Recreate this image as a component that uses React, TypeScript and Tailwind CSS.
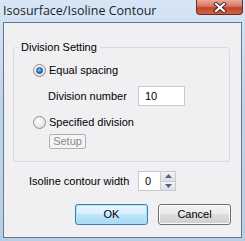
import React from "react";

function Radio({ checked }: { checked?: boolean }) {
  return (
    <span className="w-[13px] h-[13px] rounded-full border border-[#8e8f8f] bg-[radial-gradient(circle_at_40%_35%,#ffffff,#d6d6d6)] flex items-center justify-center shrink-0">
      {checked && (
        <span className="w-[7px] h-[7px] rounded-full bg-[radial-gradient(circle_at_40%_35%,#7fd2f7,#1c6ab0_70%,#0d4a86)] border border-[#1a4f82]" />
      )}
    </span>
  );
}

export default function App() {
  return (
    <div
      className="w-[245px] h-[241px] flex flex-col bg-[linear-gradient(180deg,#d7e6f6_0%,#bfd5ee_40%,#b6cfe9_100%)] text-[11px]"
      style={{ fontFamily: '"Liberation Sans", Arial, sans-serif' }}
    >
      {/* Title bar */}
      <div className="h-[22px] flex items-start justify-between shrink-0">
        <span
          className="pl-[3px] pt-[3px] text-[12.5px] leading-[15px] text-[#1e1e1e] whitespace-nowrap"
          style={{ fontFamily: '"Open Sans", "Noto Sans", sans-serif' }}
        >
          Isosurface/Isoline Contour
        </span>
        <div className="mr-[2px] w-[47px] h-[15px] rounded-b-[4px] border border-t-0 border-[#6b2a20] bg-[linear-gradient(180deg,#e9a99b_0%,#d7765f_45%,#c2432b_55%,#d0624a_100%)] flex items-center justify-center">
          <svg width="14" height="11" viewBox="0 0 14 11">
            <path d="M3 2 L11 9 M11 2 L3 9" stroke="#4a2a28" strokeWidth="4" strokeLinecap="square" />
            <path d="M3 2 L11 9 M11 2 L3 9" stroke="#ffffff" strokeWidth="2" strokeLinecap="square" />
          </svg>
        </div>
      </div>

      {/* Client area */}
      <div className="mx-[3px] mb-[3px] flex-1 border border-[#6a7786] bg-[#f0eff2] flex flex-col text-[#000]">
        <fieldset className="ml-[9px] mt-[17px] w-[217px] h-[122px] border border-[#d5dbe1] rounded-[3px] px-0 pb-0 pt-0">
          <legend className="ml-[4px] px-[3px] leading-[14px] whitespace-nowrap">Division Setting</legend>
          <div className="flex flex-col pl-[19px]">
            <div className="flex items-center gap-[3px] mt-[9px] h-[14px]">
              <Radio checked />
              <span className="leading-[14px] whitespace-nowrap">Equal spacing</span>
            </div>
            <div className="flex items-center mt-[9px] h-[20px] pl-[15px]">
              <span className="w-[90px] leading-[14px] whitespace-nowrap">Division number</span>
              <div className="w-[47px] h-[20px] border border-[#c5cbd3] bg-white flex items-center pl-[6px]">10</div>
            </div>
            <div className="flex items-center gap-[3px] mt-[9px] h-[14px]">
              <Radio />
              <span className="leading-[14px] whitespace-nowrap">Specified division</span>
            </div>
            <div className="pl-[16px] mt-[5px]">
              <div className="w-[37px] h-[15px] border border-[#adb2b5] rounded-[2px] bg-[#f4f4f4] text-[#8a8a8a] flex items-center justify-center leading-[13px]">
                Setup
              </div>
            </div>
          </div>
        </fieldset>

        <div className="flex items-center ml-[25px] mt-[9px] h-[20px]">
          <span className="w-[109px] leading-[14px] whitespace-nowrap">Isoline contour width</span>
          <div className="w-[38px] h-[20px] border border-[#c5cbd3] bg-white flex items-stretch">
            <span className="flex-1 pl-[6px] flex items-center">0</span>
            <div className="w-[15px] flex flex-col border-l border-[#c5cbd3]">
              <div className="flex-1 flex items-center justify-center bg-[linear-gradient(180deg,#f4f4f4,#dedede)] border-b border-[#c5cbd3]">
                <svg width="7" height="4" viewBox="0 0 7 4"><path d="M0 4 L3.5 0 L7 4 Z" fill="#4d6185" /></svg>
              </div>
              <div className="flex-1 flex items-center justify-center bg-[linear-gradient(180deg,#f4f4f4,#dedede)]">
                <svg width="7" height="4" viewBox="0 0 7 4"><path d="M0 0 L3.5 4 L7 0 Z" fill="#4d6185" /></svg>
              </div>
            </div>
          </div>
        </div>

        <div className="flex gap-[10px] ml-[71px] mt-[13px]">
          <div className="w-[73px] h-[21px] rounded-[3px] border border-[#3c7fb1] bg-[linear-gradient(180deg,#eaf6fd_0%,#d9f0fc_45%,#bee6fd_50%,#a7d9f5_100%)] shadow-[inset_0_0_0_1px_#b0e0f8] flex items-center justify-center">
            OK
          </div>
          <div className="w-[73px] h-[21px] rounded-[3px] border border-[#707070] bg-[linear-gradient(180deg,#f2f2f2_0%,#ebebeb_45%,#dddddd_50%,#cfcfcf_100%)] shadow-[inset_0_0_0_1px_#fcfcfc] flex items-center justify-center">
            Cancel
          </div>
        </div>
      </div>
    </div>
  );
}
